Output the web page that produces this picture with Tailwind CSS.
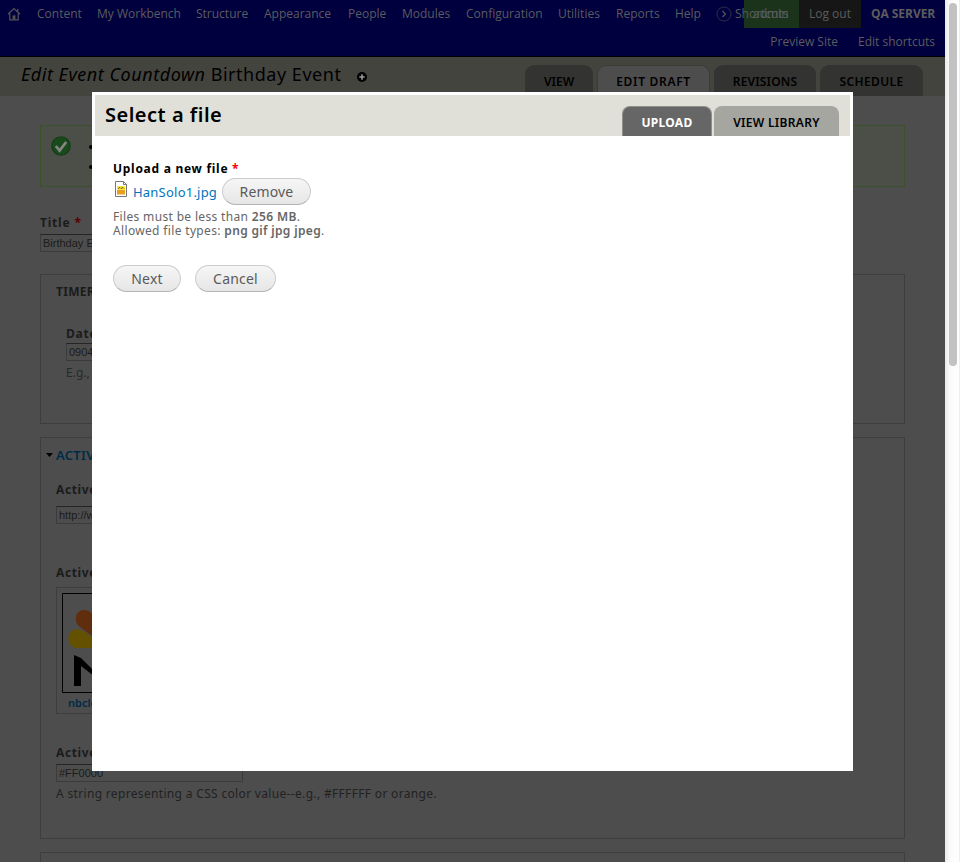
<!DOCTYPE html>
<html lang="en">
<head>
<meta charset="utf-8">
<title>Edit Event Countdown Birthday Event</title>
<script src="https://cdn.jsdelivr.net/npm/@tailwindcss/browser@4"></script>
</head>
<body class="relative flex h-[862px] w-[960px] overflow-hidden bg-[#4d4d4d] font-['Noto_Sans','Open_Sans',sans-serif] text-[12px]">
<div class="flex h-[862px] w-[945px] flex-none flex-col overflow-hidden">
  <!-- Toolbar -->
  <nav class="h-[57px] flex-none border-b border-black bg-[#00003f] font-['Open_Sans',sans-serif] text-[12px] text-[#5c5c5c]">
    <div class="flex h-[28px] items-center whitespace-nowrap leading-[28px]">
      <svg class="ml-[7px] w-[14px] flex-none" height="14" viewBox="0 0 14 14" fill="none" stroke="#545454" stroke-width="1.2"><path d="M1 7.3 7 1.5l6 5.8M2.8 6.5v6.3h8.4V6.5M10.7 4.5V2"/><path d="M5.6 8.4h2.8v4H5.6z" fill="#545454" stroke="none"/></svg>
      <span class="ml-4 w-[60px] flex-none">Content</span>
      <span class="w-[99px] flex-none">My Workbench</span>
      <span class="w-[68px] flex-none">Structure</span>
      <span class="w-[84px] flex-none">Appearance</span>
      <span class="w-[54px] flex-none">People</span>
      <span class="w-[64px] flex-none">Modules</span>
      <span class="w-[92px] flex-none">Configuration</span>
      <span class="w-[58px] flex-none">Utilities</span>
      <span class="w-[59px] flex-none">Reports</span>
      <span class="w-[41px] flex-none">Help</span>
      <svg class="w-[16px] flex-none" height="16" viewBox="0 0 16 16" fill="none" stroke="#2e2e48" stroke-width="1"><circle cx="8" cy="8" r="7"/><path d="m6.500 5 3 3-3 3" stroke="#545454" stroke-width="1.2"/></svg>
      <div class="relative h-[28px] w-[67px] flex-none">
        <span class="absolute right-0 h-[28px] w-[55px] bg-[#1b331b]"></span>
        <span class="absolute left-[3px]">Shortcuts</span>
        <span class="absolute left-[21px]">admin</span>
      </div>
      <span class="h-[28px] w-[62px] flex-none bg-[#161616] text-center">Log out</span>
      <span class="ml-[10px] font-bold tracking-[-.05px]">QA SERVER</span>
    </div>
    <div class="flex h-[28px] justify-end gap-5 pr-[10px] leading-[27px]"><span>Preview Site</span><span>Edit shortcuts</span></div>
  </nav>
  <!-- Page heading and primary tabs -->
  <header class="flex h-[39px] flex-none items-start bg-[#44443f] pl-[21px] text-black">
    <h1 class="w-[336px] flex-none whitespace-nowrap text-[18px] leading-[35px] tracking-[.53px]"><i>Edit Event Countdown</i> Birthday Event</h1>
    <svg class="mt-[15px] flex-none" width="10" height="10" viewBox="0 0 10 10"><circle cx="5" cy="5" r="5"/><path d="M5 2.3v5.4M2.3 5h5.4" stroke="#999" stroke-width="1.6"/></svg>
    <div class="ml-[158px] mt-[8px] flex h-[31px] text-center text-[12px] font-semibold leading-[33px]">
      <span class="w-[68px] rounded-t-[9px] bg-[#333331]">VIEW</span>
      <span class="ml-[4px] w-[113px] rounded-t-[9px] border border-b-0 border-[#3b3b37] bg-[#4d4d4d] leading-[32px] tracking-[.7px]">EDIT DRAFT</span>
      <span class="ml-[4px] w-[102px] rounded-t-[9px] bg-[#333331] tracking-[.15px]">REVISIONS</span>
      <span class="ml-[4px] w-[103px] rounded-t-[9px] bg-[#333331] tracking-[.4px]">SCHEDULE</span>
    </div>
  </header>
  <main class="flex flex-col px-[40px] pt-[29px] text-[#1b1b1b]">
    <div class="flex h-[62px] border border-[#39522a] bg-[#4b4f48] pl-[10px] pt-[10px]">
      <svg width="20" height="20" viewBox="0 0 20 20"><circle cx="10" cy="10" r="9.8" fill="#143f17"/><circle cx="10" cy="10" r="8.4" fill="#1a4a1c"/><path d="m4.8 10 3.8 4.6L15.2 6" fill="none" stroke="#858585" stroke-width="2.7"/></svg>
      <ul class="ml-[18px] mt-[9px] flex flex-col gap-4"><li class="size-1 rounded-full bg-black"></li><li class="size-1 rounded-full bg-black"></li></ul>
    </div>
    <label class="mt-[28px] h-[19px] font-bold leading-[16px] tracking-[.8px]">Title <span class="text-[#590000]">*</span></label>
    <div class="h-[18px] w-[300px] border border-[#3b3b3b] border-t-[#252525] px-[2px] font-['Liberation_Sans',sans-serif] text-[11px] leading-[17px]">Birthday Event</div>
    <section class="mt-[22px] flex h-[150px] flex-col border border-[#3e3e3e] pl-[15px] pt-[9px]">
      <h2 class="font-bold leading-[16px] tracking-[.3px]">TIMER</h2>
      <div class="flex flex-col pl-[10px] pt-[26px]">
        <label class="h-[17px] font-bold leading-[16px] tracking-[.8px]">Date</label>
        <div class="h-[18px] w-[100px] border border-[#3b3b3b] border-t-[#252525] px-[2px] font-['Liberation_Sans',sans-serif] text-[11px] leading-[17px]">09042015</div>
        <p class="mt-[3px] text-[#292929]">E.g., 09042015</p>
      </div>
    </section>
    <section class="mt-[13px] flex h-[402px] flex-none flex-col border border-[#3e3e3e] pl-[15px] pt-[9px]">
      <h2 class="-ml-[10px] flex items-center text-[13px] font-semibold leading-[16px] tracking-[.3px] text-[#002b47]"><svg class="mr-[3px]" width="7" height="4"><path d="M0 0h7L3.5 4z" fill="#000"/></svg>ACTIVE</h2>
      <label class="mt-[19px] h-[24px] font-bold leading-[16px] tracking-[.6px]">Active URL</label>
      <div class="h-[18px] w-[188px] border border-[#3b3b3b] border-t-[#252525] px-[2px] font-['Liberation_Sans',sans-serif] text-[11px] leading-[17px]">http://www.nbc.com</div>
      <label class="mt-[41px] h-[22px] font-bold leading-[16px] tracking-[.6px]">Active Image</label>
      <figure class="h-[127px] w-[112px] border border-[#3e3e3e] pl-[5px] pt-[5px]">
        <svg width="100" height="100" viewBox="0 0 100 100"><path d="M.5.5h99v99H.5z" fill="#4d4d4d" stroke="#000"/><path d="M14 24C15 14 32 14 33 28L38 49 18 34Q13 30 14 24" fill="#602d0e"/><path d="M15 36Q26 38 39 55H15C3 54 4 37 15 36" fill="#635100"/><path d="M12 93V62l7 3 27 27V63h7v30h-8L19 73v20z"/></svg>
        <figcaption class="pl-[6px] pt-[2px] text-[11px] font-semibold leading-[15px] text-[#002b47]">nbclogo.jpg</figcaption>
      </figure>
      <label class="mt-[31px] h-[19px] font-bold leading-[16px] tracking-[.6px]">Active Color</label>
      <div class="h-[18px] w-[187px] border border-[#3b3b3b] border-t-[#252525] px-[2px] font-['Liberation_Sans',sans-serif] text-[11px] leading-[17px]">#FF0000</div>
      <p class="mt-[4px] text-[12px] leading-[16px] tracking-[.33px] text-[#222]">A string representing a CSS color value--e.g., #FFFFFF or orange.</p>
    </section>
    <section class="mt-[13px] h-[40px] flex-none border border-[#3e3e3e]"></section>
  </main>
</div>
<!-- Scrollbar -->
<aside class="h-[862px] w-[15px] flex-none border-r border-[#eee] bg-linear-to-r from-[#e9e9e9] from-0% via-[#fafafa] via-30% to-white pl-[4px] pt-[3px]"><div class="h-[363px] w-[8px] rounded-full bg-[#c2c2c2]"></div></aside>
<!-- File selection dialog -->
<div role="dialog" class="absolute left-[92px] top-[92px] flex h-[679px] w-[761px] flex-col bg-white p-[3px] text-black">
  <header class="flex h-[41px] flex-none justify-between bg-[#e0e0d8] pl-[10px] pr-[11px]">
    <h2 class="whitespace-nowrap text-[20px] font-semibold leading-[39px] tracking-[.5px]">Select a file</h2>
    <div class="mt-[11px] flex gap-[2px] text-center text-[12px] font-semibold leading-[33px]">
      <span class="w-[90px] rounded-t-[8px] border border-b-0 border-[#8f8f8b] bg-[#666] font-bold text-white leading-[31px] tracking-[.3px]">UPLOAD</span>
      <span class="w-[125px] rounded-t-[8px] bg-[#a6a6a0] tracking-[.3px]">VIEW LIBRARY</span>
    </div>
  </header>
  <form class="flex flex-col pl-[18px] pt-[24px] text-[#666]">
    <label class="h-[18px] whitespace-nowrap font-bold leading-[17px] tracking-[.72px] text-black">Upload a new file <span class="text-[#f00]">*</span></label>
    <div class="flex h-[27px] items-start">
      <svg class="ml-[2px] mt-[3px]" width="12" height="16" viewBox="0 0 12 16"><path d="M.5.5h8l3 3v12H.5z" fill="#fff" stroke="#777"/><path d="M8.5.5v3h3" fill="none" stroke="#777"/><path d="M2 5h8v8.500H2z" fill="#e8a01c"/><path d="M2 5h8v4H2z" fill="#ffe83c"/><path d="M3 7.500 5 6.500l1 1 2-1 1 1" fill="none" stroke="#70500f"/></svg>
      <a class="ml-[6px] w-[89px] text-[13px] leading-[28px] tracking-[.22px] text-[#0074bd]">HanSolo1.jpg</a>
      <button type="button" class="h-[27px] w-[89px] rounded-full border border-[#ccc] border-b-[#b4b4b4] bg-linear-to-b from-[#f6f6f6] to-[#e6e6e6] text-[14px] leading-[25px] tracking-[.15px] text-[#5a5a5a]">Remove</button>
    </div>
    <p class="mt-[5px] text-[12px] leading-[14px] tracking-[.34px]">Files must be less than <b class="font-semibold">256 MB</b>.<br>Allowed file types: <b class="font-semibold">png gif jpg jpeg</b>.</p>
    <div class="mt-[27px] flex gap-[14px] text-[14px] leading-[25px] tracking-[.2px] text-[#5a5a5a]">
      <button type="button" class="h-[27px] w-[68px] rounded-full border border-[#ccc] border-b-[#b4b4b4] bg-linear-to-b from-[#f6f6f6] to-[#e6e6e6]">Next</button>
      <button type="button" class="h-[27px] w-[81px] rounded-full border border-[#ccc] border-b-[#b4b4b4] bg-linear-to-b from-[#f6f6f6] to-[#e6e6e6]">Cancel</button>
    </div>
  </form>
</div>
</body>
</html>
